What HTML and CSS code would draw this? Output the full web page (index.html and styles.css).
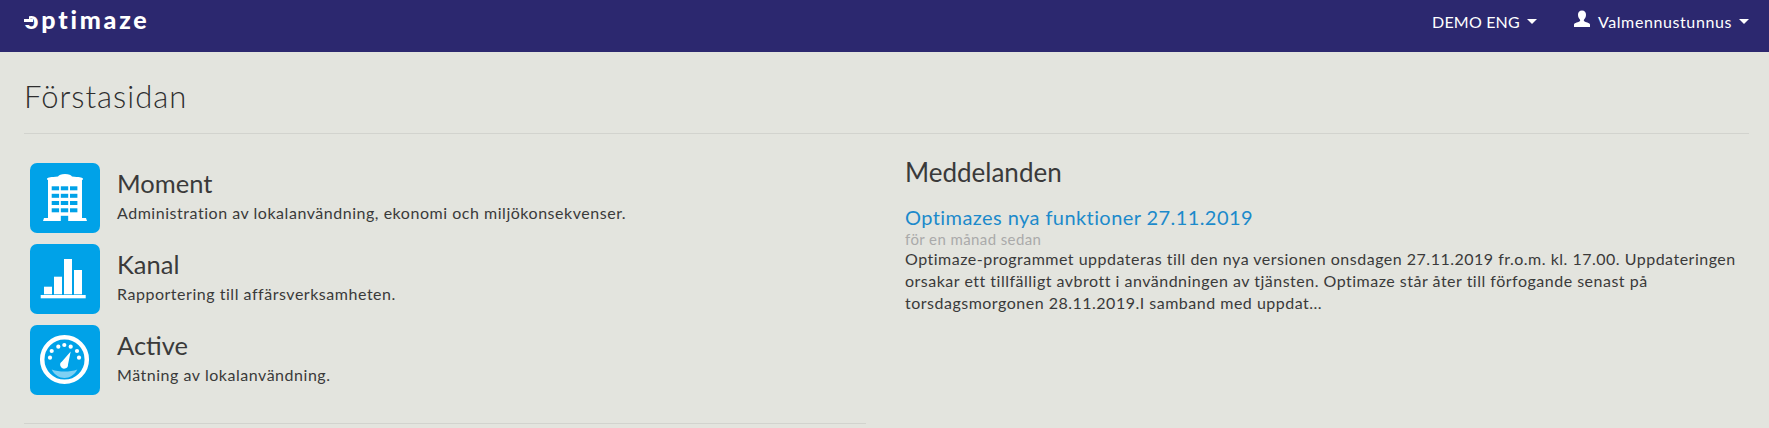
FILE: index.html
```html
<!DOCTYPE html>
<html lang="sv">
<head>
    <meta charset="UTF-8">
    <title>Förstasidan</title>
    <link rel="stylesheet" href="styles.css">
</head>
<body>

    <nav class="navbar">
        <a class="brand" href="#"><span class="brand-o">o</span>ptimaze</a>
        <ul class="nav-menu">
            <li><a class="nav-demo" href="#">DEMO ENG <span class="caret"></span></a></li>
            <li>
                <a href="#">
                    <svg class="user-icon" viewBox="0 0 18 18" width="18" height="18">
                        <path fill="#fff" d="M9 .5c2.600 0 4 1.900 4 4.300 0 1.900-.8 3.700-1.900 4.800-.4.400-.4 1.300.1 1.700 1.200.9 5.300 1.500 5.800 3.200v2.500H1v-2.500c.5-1.700 4.600-2.300 5.800-3.200.5-.4.500-1.300.1-1.700C5.800 8.500 5 6.700 5 4.800 5 2.400 6.400.5 9 .5z"/>
                    </svg>
                    Valmennustunnus <span class="caret"></span>
                </a>
            </li>
        </ul>
    </nav>

    <div class="page">
        <h1 class="page-title">Förstasidan</h1>

        <div class="columns">
            <div class="col-left">
                <a class="app-row" href="#">
                    <span class="app-icon">
                        <svg viewBox="0 0 70 70" width="70" height="70">
                            <path fill="#fff" d="M17 15.500c1-1 4-1.500 11-2 1-1.500 3-2.500 7-2.500s6 1 7 2.500c7 .5 10 1 11 2v1l-1 .5V55h4l1 3H13l1-3h4V17l-1-.5z"/>
                            <g fill="#00a2e8">
                                <rect x="21.700" y="23.300" width="7.400" height="4"/>
                                <rect x="30.800" y="23.300" width="7.400" height="4"/>
                                <rect x="40" y="23.300" width="7.400" height="4"/>
                                <rect x="21.700" y="30.800" width="7.400" height="4"/>
                                <rect x="30.800" y="30.800" width="7.400" height="4"/>
                                <rect x="40" y="30.800" width="7.400" height="4"/>
                                <rect x="21.700" y="38" width="7.400" height="4"/>
                                <rect x="30.800" y="38" width="7.400" height="4"/>
                                <rect x="40" y="38" width="7.400" height="4"/>
                                <rect x="21.700" y="45.300" width="7.400" height="4"/>
                                <rect x="30.800" y="45.300" width="7.400" height="4"/>
                                <rect x="40" y="45.300" width="7.400" height="4"/>
                                <rect x="30.800" y="52.800" width="7.400" height="5.200"/>
                            </g>
                        </svg>
                    </span>
                    <span class="app-text">
                        <span class="app-name">Moment</span>
                        <span class="app-desc">Administration av lokalanvändning, ekonomi och miljökonsekvenser.</span>
                    </span>
                </a>
                <a class="app-row" href="#">
                    <span class="app-icon">
                        <svg viewBox="0 0 70 70" width="70" height="70">
                            <g fill="#fff">
                                <rect x="10.700" y="51" width="45" height="3.300"/>
                                <rect x="14" y="42.700" width="8" height="7.600"/>
                                <rect x="24" y="32.700" width="8" height="17.600"/>
                                <rect x="34" y="15" width="8" height="35.300"/>
                                <rect x="44" y="26" width="8" height="24.300"/>
                            </g>
                        </svg>
                    </span>
                    <span class="app-text">
                        <span class="app-name">Kanal</span>
                        <span class="app-desc">Rapportering till affärsverksamheten.</span>
                    </span>
                </a>
                <a class="app-row" href="#">
                    <span class="app-icon">
                        <svg viewBox="0 0 70 70" width="70" height="70">
                            <circle cx="34.500" cy="34.500" r="22.300" fill="none" stroke="#fff" stroke-width="4.500"/>
                            <path fill="#7fd0f3" d="M21.700 44.500c4 1.500 8 2 12.800 2s9-.5 12.800-2c-2.800 5.500-7.500 8.500-12.800 8.500s-10-3-12.800-8.500z"/>
                            <g fill="#fff">
                                <circle cx="20" cy="32.700" r="2.100"/>
                                <circle cx="21.700" cy="26" r="2.100"/>
                                <circle cx="28.300" cy="21.700" r="2.100"/>
                                <circle cx="34.300" cy="20" r="2.100"/>
                                <circle cx="40.700" cy="21.700" r="2.100"/>
                                <circle cx="47" cy="26" r="2.100"/>
                                <circle cx="49" cy="32.700" r="2.100"/>
                                <path d="M40.700 26.500L38 39.500a3.900 3.900 0 1 1-6-3z"/>
                            </g>
                        </svg>
                    </span>
                    <span class="app-text">
                        <span class="app-name">Active</span>
                        <span class="app-desc">Mätning av lokalanvändning.</span>
                    </span>
                </a>
                <hr class="divider">
            </div>

            <div class="col-right">
                <h2 class="news-title">Meddelanden</h2>
                <a class="news-link" href="#">Optimazes nya funktioner 27.11.2019</a>
                <div class="news-date">för en månad sedan</div>
                <p class="news-text">Optimaze-programmet uppdateras till den nya versionen onsdagen 27.11.2019 fr.o.m. kl. 17.00. Uppdateringen orsakar ett tillfälligt avbrott i användningen av tjänsten. Optimaze står åter till förfogande senast på torsdagsmorgonen 28.11.2019.I samband med uppdat...</p>
            </div>
        </div>
    </div>

</body>
</html>
```

FILE: styles.css
```css
html, body {
    height: 100%;
}

body {
    font-family: 'Lato', 'Open Sans', sans-serif;
    margin: 0;
    padding: 0;
    background-color: #e3e4de;
    color: #3a3a3a;
    font-size: 16px;
    overflow: hidden;
}

a {
    text-decoration: none;
    color: inherit;
}

.navbar {
    display: flex;
    justify-content: space-between;
    align-items: flex-start;
    height: 52px;
    padding: 0 20px 0 24px;
    background-color: #2c286f;
    color: #fff;
}

.brand {
    font-family: 'Lato', sans-serif;
    font-weight: 900;
    font-size: 25px;
    line-height: 20px;
    letter-spacing: 2.8px;
    margin-top: 9px;
}

/* the first letter of the logo has a bar through its left side */
.brand-o {
    position: relative;
    display: inline-block;
}

.brand-o::before {
    content: "";
    position: absolute;
    left: -1px;
    top: 7px;
    width: 6px;
    height: 9px;
    background-color: #2c286f;
}

.brand-o::after {
    content: "";
    position: absolute;
    left: 0;
    top: 10px;
    width: 9px;
    height: 3px;
    background-color: #fff;
}

.nav-menu {
    display: flex;
    gap: 36px;
    list-style: none;
    margin: 0;
    padding: 0;
}

.nav-menu a {
    display: flex;
    align-items: center;
    gap: 5px;
    height: 42px;
    font-size: 16px;
    letter-spacing: 0.6px;
}

.nav-menu .nav-demo {
    letter-spacing: 0.2px;
}

.user-icon {
    margin-right: 2px;
    margin-top: -4px;
}

.caret {
    display: inline-block;
    margin-left: 2px;
    border-top: 5px solid #fff;
    border-left: 5px solid transparent;
    border-right: 5px solid transparent;
}

.page {
    padding: 0 20px 0 24px;
}

.page-title {
    font-size: 31px;
    font-weight: 300;
    line-height: 36px;
    letter-spacing: 1px;
    margin: 0;
    padding: 26px 0 19px;
    border-bottom: 1px solid #d2d3ce;
    color: #2e2e2e;
}

.columns {
    display: flex;
    gap: 39px;
}

.col-left {
    width: 842px;
    padding-top: 29px;
}

.col-right {
    flex: 1;
    padding-top: 23px;
}

.app-row {
    display: flex;
    align-items: center;
    gap: 17px;
    height: 70px;
    margin-bottom: 11px;
    padding-left: 6px;
}

.app-icon {
    display: block;
    flex: none;
    width: 70px;
    height: 70px;
    background-color: #00a2e8;
    border-radius: 7px;
}

.app-text {
    display: block;
    padding-bottom: 4px;
}

.app-name {
    display: block;
    font-size: 25.5px;
    line-height: 30px;
    margin-bottom: 4px;
}

.app-desc {
    display: block;
    font-size: 16px;
    line-height: 22px;
    letter-spacing: 0.53px;
}

.divider {
    border: 0;
    border-top: 1px solid #d2d3ce;
    margin: 28px 0 0;
}

.news-title {
    font-size: 26px;
    font-weight: 400;
    line-height: 30px;
    margin: 0 0 17px;
}

.news-link {
    display: block;
    font-size: 20px;
    line-height: 26px;
    letter-spacing: 0.42px;
    color: #1c8acb;
}

.news-date {
    font-size: 15px;
    line-height: 18px;
    letter-spacing: 0.4px;
    color: #aaa;
}

.news-text {
    font-size: 16px;
    line-height: 22px;
    letter-spacing: 0.5px;
    margin: 0;
}
```
